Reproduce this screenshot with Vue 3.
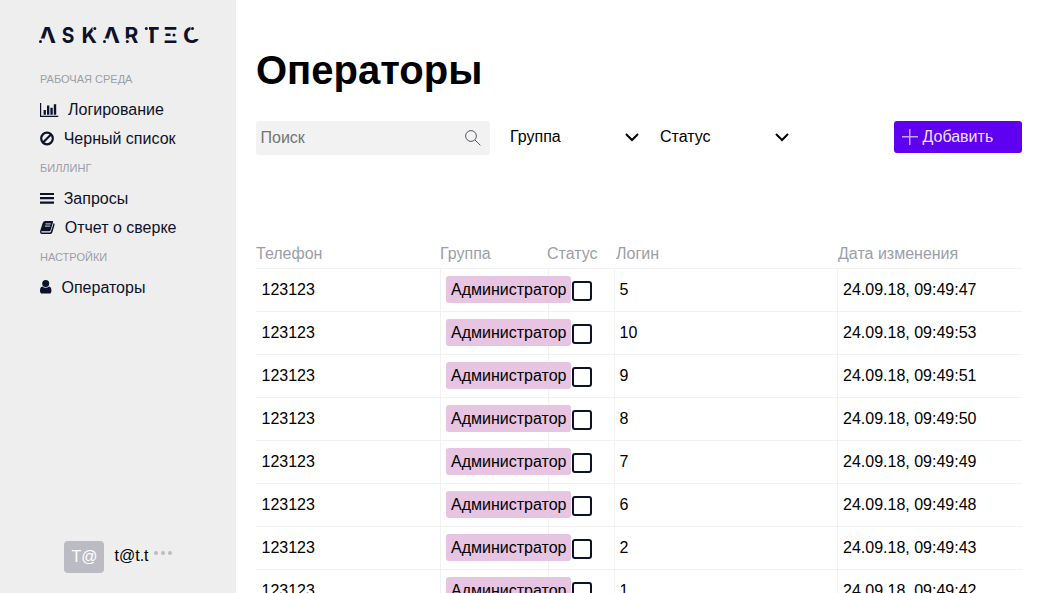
<script setup>
const sections = [
  { title: 'РАБОЧАЯ СРЕДА', items: [
    { icon: 'chart', label: 'Логирование', width: 28 },
    { icon: 'ban', label: 'Черный список', width: 23.7 },
  ] },
  { title: 'БИЛЛИНГ', items: [
    { icon: 'bars', label: 'Запросы', width: 23.7 },
    { icon: 'book', label: 'Отчет о сверке', width: 24.7 },
  ] },
  { title: 'НАСТРОЙКИ', items: [
    { icon: 'user', label: 'Операторы', width: 21.5 },
  ] },
]

const rows = [
  ['5', '47'], ['10', '53'], ['9', '51'], ['8', '50'],
  ['7', '49'], ['6', '48'], ['2', '43'], ['1', '42'],
].map(([login, sec]) => ({ phone: '123123', group: 'Администратор', login, date: `24.09.18, 09:49:${sec}` }))

const filters = ['Группа', 'Статус']
</script>

<template>
  <div class="page">
    <aside class="sidebar">
      <svg class="logo" width="168" height="34" viewBox="-4 -8 168 34" role="img" aria-label="ASKARTEC">
        <g class="letters">
          <text x="0.5" y="16.700" textLength="17.500" lengthAdjust="spacingAndGlyphs">Λ</text>
          <text x="23.700" y="16.700" textLength="12.600" lengthAdjust="spacingAndGlyphs">S</text>
          <text x="43.500" y="16.700" textLength="15.500" lengthAdjust="spacingAndGlyphs">K</text>
          <text x="64.500" y="16.700" textLength="17.500" lengthAdjust="spacingAndGlyphs">Λ</text>
          <text x="86.500" y="16.700" textLength="13.800" lengthAdjust="spacingAndGlyphs">R</text>
          <text x="106.500" y="16.700" textLength="15" lengthAdjust="spacingAndGlyphs">T</text>
          <text x="125.500" y="16.700" textLength="14" lengthAdjust="spacingAndGlyphs">Ξ</text>
          <text x="145" y="16.700" textLength="17" lengthAdjust="spacingAndGlyphs">C</text>
        </g>
        <g fill="#eee">
          <rect x="0" y="12.500" width="6.500" height="5" />
          <rect x="64" y="12.500" width="6.500" height="5" />
          <rect x="86" y="12.500" width="5.500" height="5" />
          <rect x="106" y="0" width="5" height="5" />
          <rect x="132.500" y="6.500" width="6" height="5" />
          <rect x="152.500" y="0" width="9" height="13" />
          <rect x="54.500" y="0" width="5" height="4.500" />
        </g>
        <g fill="#0c1229">
          <circle cx="2.500" cy="15.500" r="1.500" /><circle cx="66.500" cy="15.500" r="1.500" />
          <circle cx="89.300" cy="15.500" r="1.500" /><circle cx="108.300" cy="2.500" r="1.500" />
          <circle cx="136" cy="9" r="1.500" /><circle cx="154.500" cy="2.500" r="1.500" />
          <circle cx="56.800" cy="2.500" r="1.500" />
        </g>
      </svg>

      <nav>
        <section v-for="s in sections" :key="s.title">
          <h2>{{ s.title }}</h2>
          <a v-for="i in s.items" :key="i.label" class="item">
            <span class="icon" :style="{ width: i.width + 'px' }">
              <svg v-if="i.icon === 'chart'" width="19" height="16" viewBox="0 0 19 16"><path d="M0 1h1.2v12.800h17.100V15H0zM3.600 8.100h2.300v4.600H3.600zM7 3.600h2.300v9.100H7zM10.400 5.800h2.300v6.900h-2.300zM13.800 2.300h2.400v10.400h-2.400z" /></svg>
              <svg v-else-if="i.icon === 'ban'" width="14" height="16" viewBox="0 0 14 16"><g fill="none" stroke="#0c1229" stroke-width="2.200"><circle cx="7" cy="7.500" r="5.800" /><path d="M11 3.500 3 11.500" /></g></svg>
              <svg v-else-if="i.icon === 'bars'" width="14" height="16" viewBox="0 0 14 16"><path d="M0 2h14v2H0zM0 6h14v2.200H0zM0 10.600h14v2.200H0z" /></svg>
              <svg v-else-if="i.icon === 'book'" class="raised" width="15" height="16" viewBox="0 0 15 16"><path d="M5 2h7.100q1.300 0 .9 1.300l-2.400 8q-.3 1-1.500 1H1.800q-.8 0-.6.7.1.4.7.4h8q.7 0 .9-.6L13.400 5q.1-.5.1-.9 1.500.5 1.100 1.600l-2.300 7.800q-.4 1.400-1.800 1.400H1.900Q0 14.900 0 12.700q.1-1 .6-2.200L2.500 4.500Q3.100 2.300 5 2z" /><path d="M5.500 4.900h5.300M4.900 7.100h5.300" stroke="#eee" stroke-width=".9" /></svg>
              <svg v-else class="raised" width="12" height="16" viewBox="0 0 12 16"><circle cx="5.700" cy="4.600" r="3.500" /><path d="M2.300 7.500q3.400 2.700 6.800 0 2.300.4 2.300 4.200 0 2.800-2 2.800H2.100q-2.100 0-2.100-2.800 0-3.800 2.300-4.200z" /></svg>
            </span>{{ i.label }}
          </a>
        </section>
      </nav>

      <div class="account">
        <span class="avatar">T@</span>
        <span class="name">t@t.t</span>
        <span class="dots"><i></i><i></i><i></i></span>
      </div>
    </aside>

    <main>
      <h1>Операторы</h1>
      <div class="toolbar">
        <label class="search">
          <input type="text" placeholder="Поиск">
          <svg width="16" height="16" viewBox="0 0 16 16" fill="none" stroke="#555a68"><circle cx="6" cy="6" r="5.400" /><path d="m10 10 5.400 5.400" /></svg>
        </label>
        <div v-for="f in filters" :key="f" class="select">
          <span>{{ f }}</span>
          <svg width="14" height="9" viewBox="0 0 14 9" fill="none" stroke="#000" stroke-width="2"><path d="m1 1 6 6 6-6" /></svg>
        </div>
        <button class="add">
          <svg width="16" height="16" viewBox="0 0 16 16" fill="#c5a5fa"><path d="M0 7h7V0h1.500v7H16v1.500H8.500V16H7V8.500H0z" /></svg>Добавить
        </button>
      </div>

      <div class="table">
        <div class="row head">
          <span>Телефон</span><span>Группа</span><span>Статус</span><span>Логин</span><span>Дата изменения</span>
        </div>
        <div v-for="r in rows" :key="r.login" class="row body">
          <span>{{ r.phone }}</span>
          <span class="group"><b class="tag">{{ r.group }}</b></span>
          <span class="status"><i class="check"></i></span>
          <span>{{ r.login }}</span>
          <span>{{ r.date }}</span>
        </div>
      </div>
    </main>
  </div>
</template>

<style>
html, body { margin: 0; overflow: hidden; }
</style>

<style scoped>
* { box-sizing: border-box; }
.page { display: flex; width: 100vw; height: 100vh; overflow: hidden; background: #fff; color: #000; font: 16px/18px "Liberation Sans", Arial, sans-serif; }
.sidebar { display: flex; flex-direction: column; flex: none; width: 236px; padding: 18px 0 20px 40px; background: #eee; color: #0c1229; }
.logo { display: block; flex: none; margin-left: -6px; overflow: visible; }
.letters { font: 700 21.200px/1 Inter, "Open Sans", sans-serif; fill: #0c1229; }
nav { padding-top: 20px; }
h2 { margin: 0; height: 14px; font-size: 11px; line-height: 14px; font-weight: 400; color: #9b9ea8; }
section { height: 89px; }
.item { display: flex; align-items: center; height: 18px; margin-top: 11px; white-space: nowrap; }
h2 + .item { margin-top: 15px; }
.icon { display: flex; flex: none; }
.icon svg { display: block; fill: #0c1229; }
.icon .raised { margin: -1px 0 1px; }
.account { display: flex; align-items: center; height: 32px; margin-top: auto; margin-left: 24px; }
.avatar { width: 40px; height: 32px; padding-left: 1px; border-radius: 4px; background: #bbbcc3; color: #fff; text-align: center; line-height: 32px; }
.name { margin: -3px 0 0 10.500px; color: #000; }
.dots { display: flex; gap: 3px; margin: -8px 0 0 5.500px; }
.dots i { width: 4px; height: 4px; border-radius: 50%; background: #bbbcc3; }
main { flex: none; width: 786px; padding: 47px 0 0 20px; }
h1 { margin: 0; font-size: 40px; line-height: 46px; font-weight: 700; }
.toolbar { display: flex; height: 34px; margin-top: 28px; }
.search { display: flex; align-items: center; width: 234px; height: 34px; padding: 0 9px 0 4.500px; border-radius: 3px; background: #f2f2f2; }
.search input { flex: 1; min-width: 0; padding: 0; border: 0; outline: 0; background: none; font: inherit; }
.search input::placeholder { color: #757575; opacity: 1; }
.select { display: flex; align-items: center; justify-content: space-between; width: 130px; height: 32px; margin-left: 20px; padding-right: 1px; }
.add { display: flex; align-items: center; width: 128px; height: 32px; margin-left: auto; padding: 0 0 0 8px; gap: 4.500px; border: 0; border-radius: 3px; background: #5f00f0; color: #eee5fe; font: inherit; }
.add svg { margin-top: -1px; }
.table { margin-top: 89px; }
.row { display: grid; grid-template-columns: 184px 108px 66px 223px 185px; }
.head { height: 25px; padding-top: 1px; color: #9b9ea8; border-bottom: 1px solid #f2f2f2; }
.head span:nth-child(3) { margin-left: -1px; }
.head span:nth-child(4) { margin-left: 2px; }
.head span:nth-child(5) { margin-left: 1px; }
.body { height: 43px; border-bottom: 1px solid #f2f2f2; }
.body span { padding: 12px 0 0 4.500px; border-left: 1px solid #f2f2f2; white-space: nowrap; }
.body span:first-child { border-left-color: transparent; }
.body span:last-child { padding-left: 5px; }
.body .group { padding: 7px 0 0 5px; }
.tag { position: relative; display: block; width: 125px; height: 27px; padding-left: 5px; border-radius: 3px; background: #e6c4e2; font-weight: 400; line-height: 27px; }
.body .status { padding: 12px 0 0 23px; }
.check { display: block; width: 20px; height: 20px; border: 2px solid #0c1229; border-radius: 3px; }
</style>
